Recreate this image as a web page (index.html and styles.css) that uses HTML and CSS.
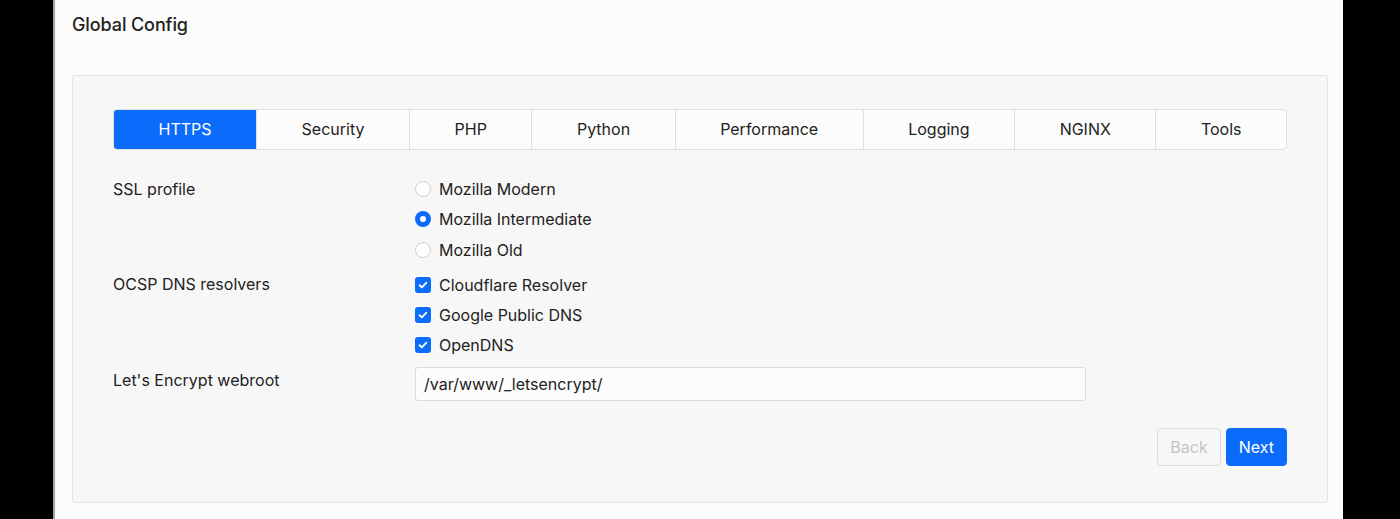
FILE: index.html
```html
<!DOCTYPE html>
<html lang="en">
<head>
<meta charset="utf-8">
<title>Global Config</title>
<link rel="stylesheet" href="styles.css">
</head>
<body>
<div class="page">
  <h1 class="title">Global Config</h1>
  <div class="card">
    <div class="tabs">
      <button class="tab active">HTTPS</button>
      <button class="tab">Security</button>
      <button class="tab">PHP</button>
      <button class="tab">Python</button>
      <button class="tab">Performance</button>
      <button class="tab">Logging</button>
      <button class="tab">NGINX</button>
      <button class="tab">Tools</button>
    </div>
    <div class="form">
      <div class="row">
        <div class="label">SSL profile</div>
        <div class="control">
          <div class="option"><span class="radio"></span><span>Mozilla Modern</span></div>
          <div class="option"><span class="radio checked"></span><span>Mozilla Intermediate</span></div>
          <div class="option"><span class="radio"></span><span>Mozilla Old</span></div>
        </div>
      </div>
      <div class="row">
        <div class="label">OCSP DNS resolvers</div>
        <div class="control">
          <div class="option"><span class="check"><svg viewBox="0 0 16 16" width="16" height="16"><path d="M4.6 8.3l2.2 2.1 4.4-4.6" fill="none" stroke="#fff" stroke-width="1.9" stroke-linecap="round" stroke-linejoin="round"/></svg></span><span>Cloudflare Resolver</span></div>
          <div class="option"><span class="check"><svg viewBox="0 0 16 16" width="16" height="16"><path d="M4.6 8.3l2.2 2.1 4.4-4.6" fill="none" stroke="#fff" stroke-width="1.9" stroke-linecap="round" stroke-linejoin="round"/></svg></span><span>Google Public DNS</span></div>
          <div class="option"><span class="check"><svg viewBox="0 0 16 16" width="16" height="16"><path d="M4.6 8.3l2.2 2.1 4.4-4.6" fill="none" stroke="#fff" stroke-width="1.9" stroke-linecap="round" stroke-linejoin="round"/></svg></span><span>OpenDNS</span></div>
        </div>
      </div>
      <div class="row row-input">
        <div class="label label-input">Let's Encrypt webroot</div>
        <div class="control">
          <input class="input" type="text" value="/var/www/_letsencrypt/">
        </div>
      </div>
    </div>
    <div class="actions">
      <button class="btn btn-back" disabled>Back</button>
      <button class="btn btn-next">Next</button>
    </div>
  </div>
</div>
</body>
</html>
```
FILE: styles.css
```css
html, body {
  margin: 0;
  padding: 0;
  background: #000;
  height: 519px;
  overflow: hidden;
}
body {
  font-family: Inter, "Noto Sans", "Liberation Sans", sans-serif;
  color: #222;
}
.page {
  margin-left: 53px;
  width: 1256px;
  height: 519px;
  border-left: 2px solid #a3a3a3;
  background: #fcfcfc;
  padding: 0 15px 0 17px;
}
.title {
  margin: 0;
  padding-top: 13px;
  font-size: 18px;
  line-height: 24px;
  font-weight: 500;
  color: #222;
  letter-spacing: -0.1px;
}
.card {
  margin-top: 38px;
  border: 1px solid #e4e4e4;
  border-radius: 3px;
  background: #f7f7f7;
  padding: 33px 40px 36px 40px;
}
.tabs {
  display: flex;
  border: 1px solid #e0e0e0;
  border-radius: 4px;
  background: #fcfcfc;
  overflow: hidden;
  height: 39px;
}
.tab {
  flex: 1 1 auto;
  border: 0;
  border-left: 1px solid #e0e0e0;
  background: transparent;
  font-family: inherit;
  font-size: 16px;
  color: #222;
  padding: 0;
  line-height: 39px;
}
.tab:first-child {
  border-left: 0;
}
.tab.active {
  background: #0b6cfb;
  color: #fff;
}
.form {
  margin-top: 24px;
}
.row {
  display: grid;
  grid-template-columns: 302px 671px;
  margin-bottom: 4.5px;
}
.row-input {
  margin-top: 6.5px;
}
.label {
  font-size: 16px;
  line-height: 30.3px;
  color: #222;
}
.label-input {
  line-height: 26px;
}
.option {
  display: flex;
  align-items: center;
  height: 30.3px;
  font-size: 16px;
  color: #222;
  gap: 8px;
}
.radio {
  width: 14px;
  height: 14px;
  border: 1px solid #cfcfcf;
  border-radius: 50%;
  background: #fff;
  flex: none;
}
.radio.checked {
  width: 6px;
  height: 6px;
  border: 5px solid #0b6cfb;
  background: #fff;
}
.check {
  width: 16px;
  height: 16px;
  border-radius: 3px;
  background: #0b6cfb;
  flex: none;
  display: flex;
}
.input {
  box-sizing: border-box;
  width: 671px;
  height: 34px;
  border: 1px solid #dcdcdc;
  border-radius: 3px;
  background: #fcfcfc;
  padding: 0 8px;
  font-family: inherit;
  font-size: 16px;
  color: #222;
}
.actions {
  display: flex;
  justify-content: flex-end;
  gap: 5px;
  margin-top: 27px;
}
.btn {
  height: 38px;
  padding: 0 12px;
  border-radius: 4px;
  font-family: inherit;
  font-size: 16px;
  border: 1px solid transparent;
}
.btn-back {
  background: transparent;
  border-color: #dcdcdc;
  color: #c4c4c4;
}
.btn-next {
  background: #0b6cfb;
  border-color: #0b6cfb;
  color: #fff;
}
```
